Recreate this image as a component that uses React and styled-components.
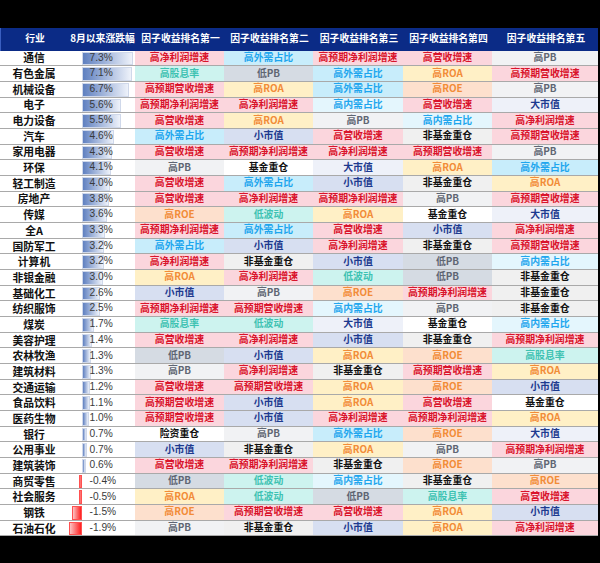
import React from 'react';
import styled, { createGlobalStyle } from 'styled-components';

const GlobalStyle = createGlobalStyle`
  html, body {
    margin: 0;
    padding: 0;
    background: #000;
  }
  body {
    font-family: "Liberation Sans", "Noto Sans CJK SC", sans-serif;
    line-height: 1;
  }
`;

const COLS = '68px 67px 89px 89px 90px 89px 106px';

// label -> [background, text colour]
const STYLES = {
  '高净利润增速': ['#fbd6dd', '#d9132b'],
  '高预期净利润增速': ['#fbd6dd', '#d9132b'],
  '高营收增速': ['#fbd6dd', '#d9132b'],
  '高预期营收增速': ['#fbd6dd', '#d9132b'],
  '高外需占比': ['#c8edfb', '#1ea6ee'],
  '高内需占比': ['#e4f6fd', '#1ea6ee'],
  '低PB': ['#d5dbe3', '#5f6673'],
  '高PB': ['#f1f2f4', '#5f6673'],
  '高ROA': ['#fff0c6', '#f28c38'],
  '高ROE': ['#fde0cd', '#f28c38'],
  '高股息率': ['#cdf3ef', '#3ec2b2'],
  '低波动': ['#cdf3ef', '#3ec2b2'],
  '小市值': ['#d7dff1', '#1d3a8f'],
  '大市值': ['#eef1f9', '#1d3a8f'],
  '基金重仓': ['#ffffff', '#111111'],
  '非基金重仓': ['#f0f0f0', '#111111'],
  '险资重仓': ['#ffffff', '#111111'],
};

const rows = [
  ['通信', 7.3, '高净利润增速', '高外需占比', '高预期净利润增速', '高营收增速', '高PB'],
  ['有色金属', 7.1, '高股息率', '低PB', '高外需占比', '高ROA', '高预期营收增速'],
  ['机械设备', 6.7, '高预期营收增速', '高ROA', '高外需占比', '高ROE', '高PB'],
  ['电子', 5.6, '高预期净利润增速', '高净利润增速', '高内需占比', '高营收增速', '大市值'],
  ['电力设备', 5.5, '高营收增速', '高ROA', '高PB', '高内需占比', '高净利润增速'],
  ['汽车', 4.6, '高外需占比', '小市值', '高营收增速', '非基金重仓', '高预期营收增速'],
  ['家用电器', 4.3, '高营收增速', '高预期净利润增速', '高净利润增速', '高预期营收增速', '高PB'],
  ['环保', 4.1, '高PB', '基金重仓', '大市值', '高ROA', '高外需占比'],
  ['轻工制造', 4.0, '高营收增速', '高外需占比', '小市值', '非基金重仓', '高ROA'],
  ['房地产', 3.8, '高营收增速', '高净利润增速', '高预期净利润增速', '高PB', '高预期营收增速'],
  ['传媒', 3.6, '高ROE', '低波动', '高ROA', '基金重仓', '大市值'],
  ['全A', 3.3, '高预期净利润增速', '高外需占比', '高营收增速', '小市值', '高净利润增速'],
  ['国防军工', 3.2, '高外需占比', '小市值', '高净利润增速', '非基金重仓', '高预期营收增速'],
  ['计算机', 3.2, '高净利润增速', '非基金重仓', '小市值', '低PB', '高内需占比'],
  ['非银金融', 3.0, '高ROA', '高净利润增速', '低波动', '低PB', '非基金重仓'],
  ['基础化工', 2.6, '小市值', '高PB', '高ROE', '高预期净利润增速', '非基金重仓'],
  ['纺织服饰', 2.5, '高预期净利润增速', '高预期营收增速', '高内需占比', '高PB', '非基金重仓'],
  ['煤炭', 1.7, '高股息率', '低波动', '大市值', '基金重仓', '高内需占比'],
  ['美容护理', 1.4, '高营收增速', '高净利润增速', '小市值', '非基金重仓', '高预期净利润增速'],
  ['农林牧渔', 1.3, '低PB', '小市值', '高ROA', '高ROE', '高股息率'],
  ['建筑材料', 1.3, '高PB', '高净利润增速', '非基金重仓', '高预期营收增速', '高ROA'],
  ['交通运输', 1.2, '高营收增速', '高预期营收增速', '高ROA', '高ROE', '小市值'],
  ['食品饮料', 1.1, '高预期营收增速', '小市值', '高ROA', '高营收增速', '基金重仓'],
  ['医药生物', 1.0, '高预期营收增速', '小市值', '高净利润增速', '高预期净利润增速', '高ROA'],
  ['银行', 0.7, '险资重仓', '高PB', '高外需占比', '高ROE', '大市值'],
  ['公用事业', 0.7, '小市值', '非基金重仓', '高ROA', '高PB', '高预期净利润增速'],
  ['建筑装饰', 0.6, '高营收增速', '高预期净利润增速', '非基金重仓', '高ROE', '高PB'],
  ['商贸零售', -0.4, '低PB', '低波动', '高内需占比', '非基金重仓', '高ROE'],
  ['社会服务', -0.5, '高ROA', '低波动', '低PB', '高股息率', '高营收增速'],
  ['钢铁', -1.5, '高ROE', '高预期营收增速', '高营收增速', '高ROA', '小市值'],
  ['石油石化', -1.9, '高PB', '非基金重仓', '小市值', '高ROA', '高净利润增速'],
];

const headers = ['行业', '8月以来涨跌幅', '因子收益排名第一', '因子收益排名第二', '因子收益排名第三', '因子收益排名第四', '因子收益排名第五'];

const Page = styled.div`
  padding-top: 28px;
  width: 600px;
  height: 563px;
  box-sizing: border-box;
  background: #000;
`;

const Table = styled.div`
  width: 598px;
  background: #fff;
`;

const HeaderRow = styled.div`
  display: grid;
  grid-template-columns: ${COLS};
  height: 22.5px;
  background: #0b2b86;
  border-left: 1px solid #3a5fc0;
  box-sizing: border-box;
`;

const HeaderCell = styled.div`
  display: flex;
  align-items: center;
  justify-content: center;
  color: #fff;
  font-family: "Noto Sans CJK SC", sans-serif;
  font-weight: 700;
  font-size: 9.8px;
  white-space: nowrap;
`;

const Row = styled.div`
  display: grid;
  grid-template-columns: ${COLS};
  height: 15.68px;
  border-bottom: 1px solid #a9a9a9;
  box-sizing: border-box;
`;

const NameCell = styled.div`
  display: flex;
  align-items: center;
  justify-content: center;
  background: #fff;
  color: #111;
  font-family: "Noto Sans CJK SC", sans-serif;
  font-weight: 700;
  font-size: 10.8px;
  white-space: nowrap;
  overflow: hidden;
`;

const BarCell = styled.div`
  position: relative;
  background: #fff;
  display: flex;
  align-items: center;
  overflow: hidden;
`;

const Bar = styled.div`
  position: absolute;
  top: 1px;
  bottom: 0;
  background: ${p => p.$neg
    ? 'linear-gradient(to right, #fcc4c4, #ff1f1f)'
    : 'linear-gradient(to right, #5f80c0, #eef2fa)'};
  border: 1px solid ${p => p.$neg ? '#ff5050' : '#cfd8ea'};
  box-sizing: border-box;
`;

const Pct = styled.span`
  position: relative;
  padding-left: 21.5px;
  font-family: "Liberation Sans", sans-serif;
  font-size: 10.2px;
  color: #3a3a3a;
`;

const FactorCell = styled.div`
  display: flex;
  align-items: center;
  justify-content: center;
  background: ${p => p.$bg};
  color: ${p => p.$fg};
  font-family: "Noto Sans CJK SC", sans-serif;
  font-weight: 700;
  font-size: 9.9px;
  white-space: nowrap;
  overflow: hidden;
`;

const AXIS = 14;
const SCALE = 7;

function DataBar({ value }) {
  const neg = value < 0;
  const w = Math.abs(value) * SCALE;
  const style = neg ? { left: AXIS - w, width: w } : { left: AXIS, width: w };
  return (
    <BarCell>
      <Bar $neg={neg} style={style} />
      <Pct>{value.toFixed(1)}%</Pct>
    </BarCell>
  );
}

export default function App() {
  return (
    <>
      <GlobalStyle />
      <Page>
        <Table>
          <HeaderRow>
            {headers.map(h => <HeaderCell key={h}>{h}</HeaderCell>)}
          </HeaderRow>
          {rows.map(([name, value, ...factors]) => (
            <Row key={name}>
              <NameCell>{name}</NameCell>
              <DataBar value={value} />
              {factors.map((f, i) => (
                <FactorCell key={i} $bg={STYLES[f][0]} $fg={STYLES[f][1]}>{f}</FactorCell>
              ))}
            </Row>
          ))}
        </Table>
      </Page>
    </>
  );
}
